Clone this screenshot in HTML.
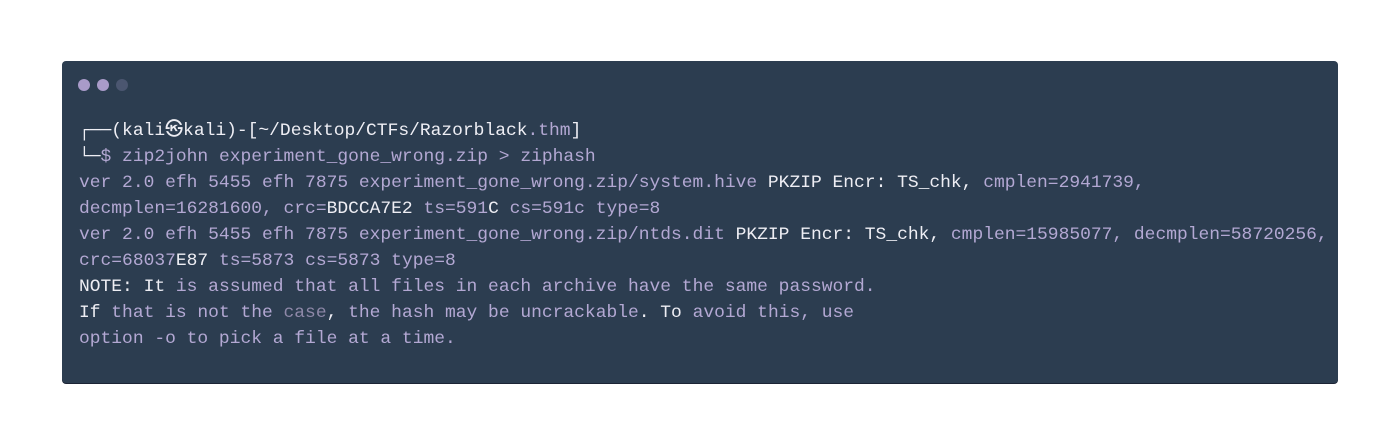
<!DOCTYPE html>
<html><head><style>
body{margin:0;width:1400px;height:445px;background:#fff;overflow:hidden}
.term{position:absolute;left:62px;top:61px;width:1276px;height:322px;background:#2c3d50;border-radius:4px;box-shadow:0 1px 0 #1c2435}
.dots{position:absolute;left:16px;top:17px}
.dots span{display:inline-block;width:12px;height:12px;border-radius:50%;margin-right:7px;background:#a99bc9}
.dots span:last-child{background:#4b5670}
pre{position:absolute;left:17px;top:57px;margin:0;font-family:"Liberation Mono",monospace;font-size:17.95px;line-height:26px;color:#b3a8d3;white-space:pre}
.w{color:#eeeef4}
.d{color:#8e88a8}
</style></head><body>
<div class="term">
<div class="dots"><span></span><span></span><span></span></div>
<pre><span class="w">┌──(kali㉿kali)-[~/Desktop/CTFs/Razorblack</span>.thm<span class="w">]</span>
<span class="w">└─</span>$ zip2john experiment_gone_wrong.zip &gt; ziphash
ver 2.0 efh 5455 efh 7875 experiment_gone_wrong.zip/system.hive <span class="w">PKZIP Encr: TS_chk,</span> cmplen=2941739,
decmplen=16281600, crc=<span class="w">BDCCA7E2</span> ts=591<span class="w">C</span> cs=591c type=8
ver 2.0 efh 5455 efh 7875 experiment_gone_wrong.zip/ntds.dit <span class="w">PKZIP Encr: TS_chk,</span> cmplen=15985077, decmplen=58720256,
crc=68037<span class="w">E87</span> ts=5873 cs=5873 type=8
<span class="w">NOTE: It</span> is assumed that all files in each archive have the same password.
<span class="w">If</span> that is not the <span class="d">case</span><span class="w">,</span> the hash may be uncrackable<span class="w">. To</span> avoid this, use
option -o to pick a file at a time.</pre>
</div>
</body></html>
